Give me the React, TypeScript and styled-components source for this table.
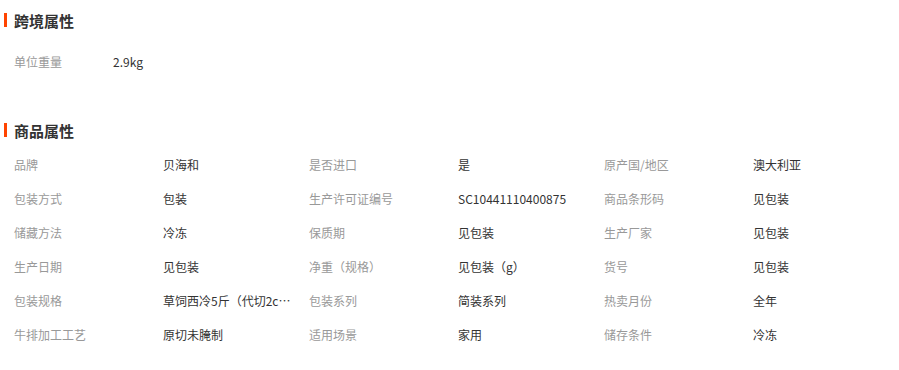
import styled, { createGlobalStyle } from "styled-components";

type Attr = { label: string; value: string };

const crossBorder: Attr[] = [{ label: "单位重量", value: "2.9kg" }];

const productAttrs: Attr[] = [
  { label: "品牌", value: "贝海和" },
  { label: "是否进口", value: "是" },
  { label: "原产国/地区", value: "澳大利亚" },
  { label: "包装方式", value: "包装" },
  { label: "生产许可证编号", value: "SC10441110400875" },
  { label: "商品条形码", value: "见包装" },
  { label: "储藏方法", value: "冷冻" },
  { label: "保质期", value: "见包装" },
  { label: "生产厂家", value: "见包装" },
  { label: "生产日期", value: "见包装" },
  { label: "净重（规格）", value: "见包装（g）" },
  { label: "货号", value: "见包装" },
  { label: "包装规格", value: "草饲西冷5斤（代切2cm厚）" },
  { label: "包装系列", value: "简装系列" },
  { label: "热卖月份", value: "全年" },
  { label: "牛排加工工艺", value: "原切未腌制" },
  { label: "适用场景", value: "家用" },
  { label: "储存条件", value: "冷冻" },
];

const App = () => {
  return (
    <>
      <GlobalStyle />
      <StyledPage>
        <Section $gap={15}>
          <Title>
            <Bar />
            跨境属性
          </Title>
          <AttrGrid $cols={1}>
            {crossBorder.map(a => (
              <Item key={a.label} $labelWidth={99}>
                <Label>{a.label}</Label>
                <Value>{a.value}</Value>
              </Item>
            ))}
          </AttrGrid>
        </Section>
        <Section $gap={8}>
          <Title>
            <Bar />
            商品属性
          </Title>
          <AttrGrid $cols={3}>
            {productAttrs.map(a => (
              <Item key={a.label} $labelWidth={149}>
                <Label>{a.label}</Label>
                <Value title={a.value}>{a.value}</Value>
              </Item>
            ))}
          </AttrGrid>
        </Section>
      </StyledPage>
    </>
  );
};

const GlobalStyle = createGlobalStyle`
  body {
    margin: 0;
    background: #fff;
    font-family: "Noto Sans CJK SC", "Noto Sans", sans-serif;
  }
`;

const StyledPage = styled.main`
  width: 899px;
  padding-top: 10px;
  display: flex;
  flex-direction: column;
  gap: 41px;
`;

const Section = styled.section<{ $gap: number }>`
  display: flex;
  flex-direction: column;
  gap: ${p => p.$gap}px;
`;

const Title = styled.h3`
  margin: 0;
  padding-left: 4px;
  display: flex;
  align-items: center;
  height: 20px;
  font-size: 15px;
  font-weight: 700;
  color: #333;
`;

const Bar = styled.span`
  width: 3px;
  height: 14px;
  margin-right: 7px;
  background: #ff4400;
`;

const AttrGrid = styled.div<{ $cols: number }>`
  display: grid;
  grid-template-columns: repeat(${p => p.$cols}, 295px);
  padding-left: 14px;
`;

const Item = styled.div<{ $labelWidth: number }>`
  display: grid;
  grid-template-columns: ${p => p.$labelWidth}px 1fr;
  height: 34px;
  align-items: center;
  font-size: 12px;
  line-height: 34px;
`;

const Label = styled.span`
  color: #999;
  white-space: nowrap;
`;

const Value = styled.span`
  color: #333;
  white-space: nowrap;
  overflow: hidden;
  text-overflow: ellipsis;
  max-width: 128px;
`;

export default App;
